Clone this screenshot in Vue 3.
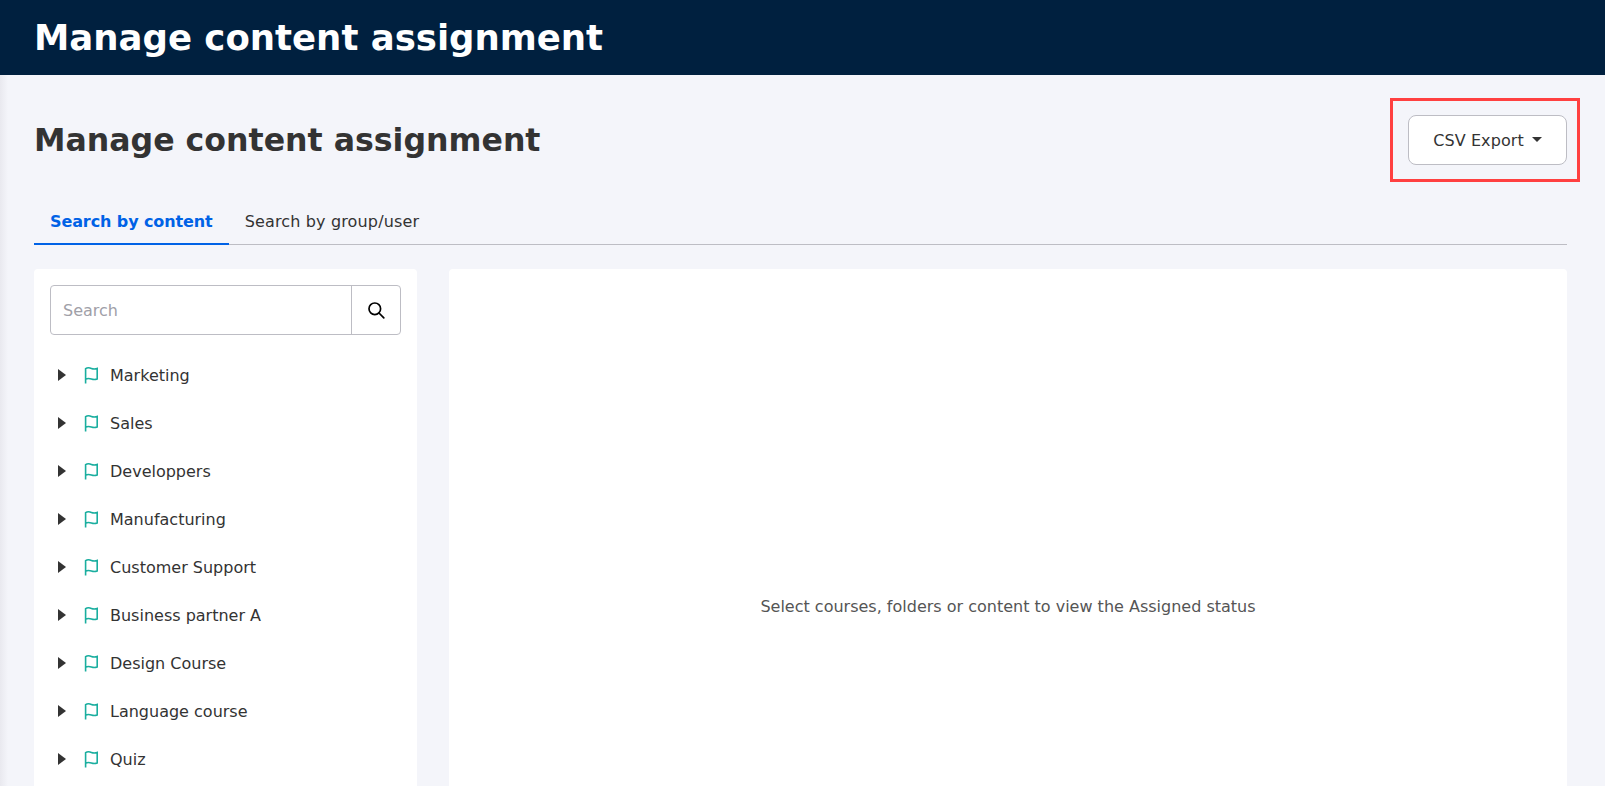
<script setup>
const rows = ['Marketing','Sales','Developpers','Manufacturing','Customer Support','Business partner A','Design Course','Language course','Quiz']
</script>

<template>
  <div class="page">
    <header class="topbar"><span class="topbar-title">Manage content assignment</span></header>
    <main class="main">
      <div class="head">
        <h1 class="title">Manage content assignment</h1>
        <div class="export-wrap">
          <button class="export">CSV Export<span class="caret"></span></button>
          <span class="highlight"></span>
        </div>
      </div>
      <nav class="tabs">
        <div class="tab active">Search by content</div>
        <div class="tab">Search by group/user</div>
      </nav>
      <div class="columns">
        <aside class="side">
          <div class="search">
            <div class="search-input">Search</div>
            <div class="search-btn">
              <svg width="18" height="18" viewBox="0 0 18 18" fill="none" stroke="#000" stroke-width="1.7"><circle cx="7.8" cy="7.8" r="5.8"/><path d="M12 12l4.800 4.800" stroke-linecap="round"/></svg>
            </div>
          </div>
          <ul class="tree">
            <li v-for="r in rows" :key="r" class="row">
              <span class="arrow"></span>
              <svg class="flag" width="16" height="17" viewBox="0 0 16 17" fill="none" stroke="#1aae9f" stroke-width="1.6"><path d="M2.600 16.500V1.600c2-1.200 4-.9 5.800-.2s3.800.7 5.800 0V12c-2 .7-4 .6-5.800 0s-3.800-.9-5.800.2"/></svg>
              <span class="label">{{ r }}</span>
            </li>
          </ul>
        </aside>
        <section class="detail">Select courses, folders or content to view the Assigned status</section>
      </div>
    </main>
  </div>
</template>

<style>
html, body { margin: 0; height: 100%; overflow: hidden; background: #f4f5fa; }
</style>
<style scoped>
.page { width: 1605px; height: 786px; overflow: hidden; font-family: "DejaVu Sans", sans-serif; color: #333; }
.topbar { height: 75px; box-sizing: border-box; padding: 0 0 1px 34px; background: #00203f; display: flex; align-items: center; }
.topbar-title { color: #fff; font-size: 35.500px; font-weight: 700; }
.main { padding: 0 38px 0 34px; height: 711px; background: linear-gradient(90deg, #e9e9ef 0, #f4f5fa 8px); }
.head { height: 129px; display: flex; align-items: center; justify-content: space-between; }
.title { margin: 0; font-size: 31.600px; font-weight: 700; color: #333; }
.export-wrap { position: relative; }
.highlight { position: absolute; left: -18px; right: -13px; top: -17px; bottom: -17px; border: 3px solid #ff4040; pointer-events: none; }
.export { width: 159px; height: 50px; border: 1px solid #bdbdc4; border-radius: 8px; background: #fff; font: inherit; font-size: 16px; letter-spacing: 0.1px; color: #333; display: flex; align-items: center; justify-content: center; gap: 8px; padding: 2px 0 0; box-sizing: border-box; }
.caret { border-left: 5px solid transparent; border-right: 5px solid transparent; border-top: 5px solid #333; margin-top: -2px; }
.tabs { display: flex; height: 41px; align-items: flex-end; border-bottom: 1px solid #bdbdc4; box-sizing: border-box; }
.tab { padding: 0 16px; height: 41px; line-height: 36px; font-size: 16px; letter-spacing: 0.15px; box-sizing: border-box; margin-bottom: -1px; }
.tab.active { color: #0062e6; font-weight: 700; border-bottom: 2px solid #0062e6; letter-spacing: -0.1px; }
.columns { display: flex; gap: 32px; margin-top: 24px; }
.side { width: 383px; background: #fff; border-radius: 4px; padding: 16px; box-sizing: border-box; height: 600px; }
.search { display: flex; height: 50px; border: 1px solid #bdbdc4; border-radius: 4px; box-sizing: border-box; }
.search-input { flex: 1; padding-left: 12px; line-height: 49px; font-size: 16px; color: #a0a0a8; }
.search-btn { width: 48px; border-left: 1px solid #bdbdc4; display: flex; align-items: center; justify-content: center; }
.tree { list-style: none; margin: 16px 0 0; padding: 0; }
.row { height: 48px; display: flex; align-items: center; padding-left: 8px; }
.arrow { border-top: 6px solid transparent; border-bottom: 6px solid transparent; border-left: 8px solid #333; }
.flag { margin-left: 17px; }
.label { margin-left: 11px; font-size: 16px; }
.detail { flex: 1; height: 686px; background: #fff; border-radius: 4px; display: flex; align-items: center; justify-content: center; font-size: 16px; color: #555; box-sizing: border-box; padding-bottom: 11px; }
</style>
